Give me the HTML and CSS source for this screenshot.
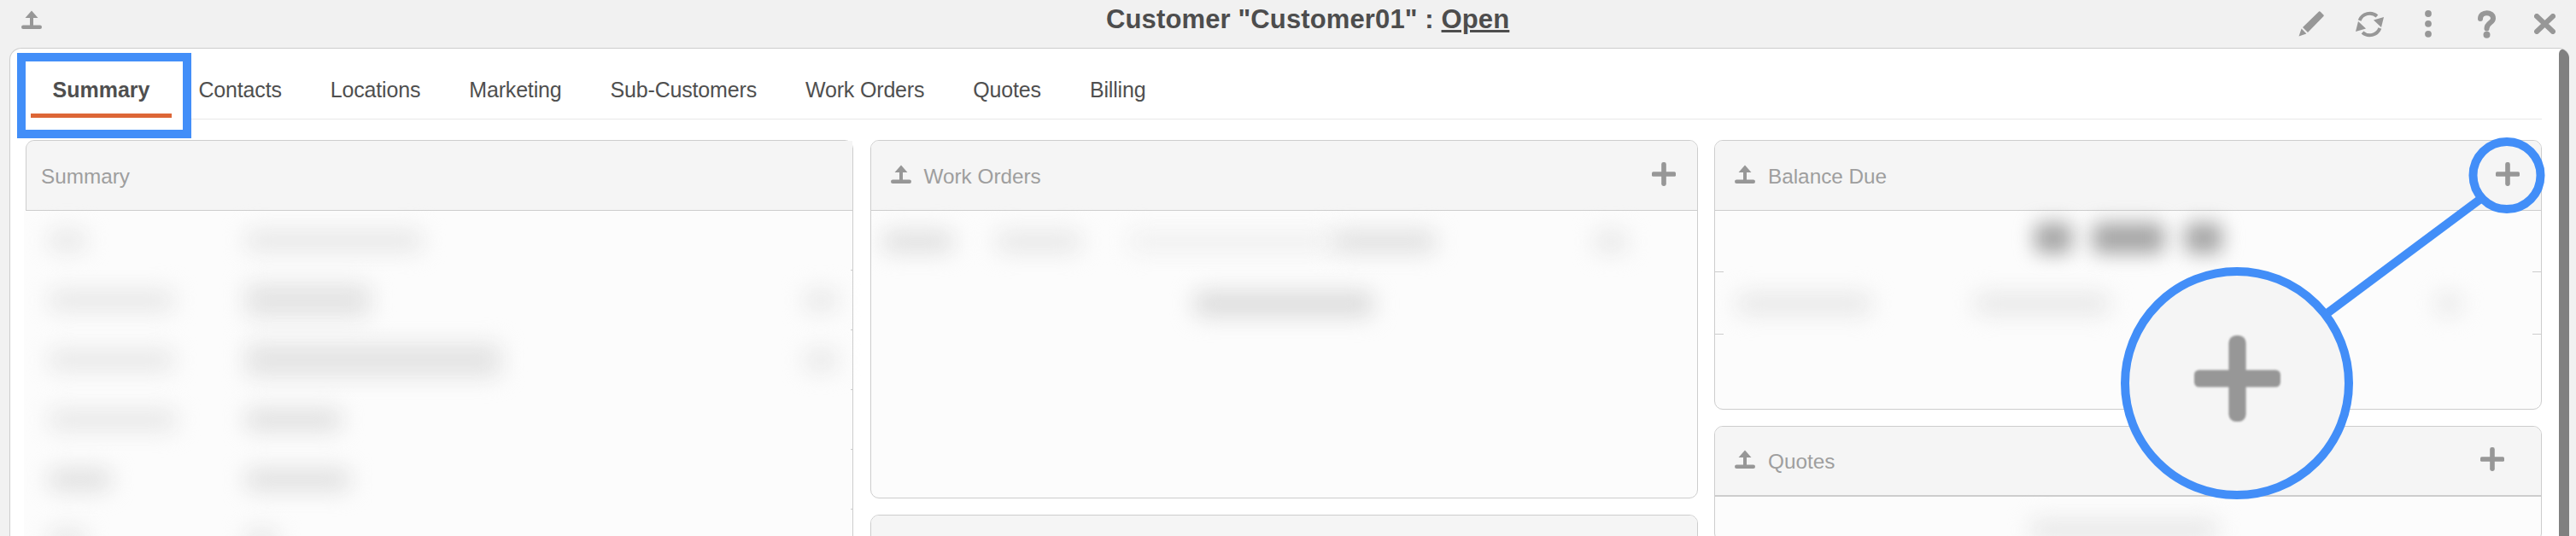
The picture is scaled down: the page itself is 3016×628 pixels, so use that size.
FILE: index.html
```html
<!DOCTYPE html>
<html lang="en">
  <head>
    <meta charset="UTF-8" />
    <title>Customer01</title>
    <link rel="stylesheet" href="styles.css">
  </head>
  <body>
    <svg class="icon-defs" width="0" height="0">
      <symbol id="i-upload" viewBox="0 0 24 22">
        <path d="M12 0.5 L19.5 9 H14 V18 H10 V9 H4.5 Z" />
        <rect x="0" y="17.5" width="24" height="4.5" rx="2.2" />
      </symbol>
      <symbol id="i-plus" viewBox="0 0 28 28">
        <rect x="0" y="11.2" width="28" height="5.6" rx="1.6" />
        <rect x="11.2" y="0" width="5.6" height="28" rx="2.4" />
      </symbol>
    </svg>

    <div class="titlebar">
      <svg class="ico-upload"><use href="#i-upload" /></svg>
      <div class="title">Customer "Customer01" : <u>Open</u></div>
      <div class="actions">
        <span class="action">
          <svg width="30" height="30" viewBox="0 0 30 30"><path d="M24 0.5 Q25 0 26 1 L29.5 4.5 Q30 5.5 29.5 6 L11 25 L5 19 Z" /><path d="M3.6 20.6 L9.4 26.4 L0.5 29.5 Z" /></svg>
        </span>
        <span class="action">
          <svg width="33" height="33" viewBox="0 0 33 33"><path class="line" d="M4.6 12 A12.8 12.8 0 0 1 25 7" /><path class="line" d="M28.4 21 A12.8 12.8 0 0 1 8 26" /><path d="M21 11.5 L33 8 L30 20 Z" /><path d="M12 21.5 L0 25 L3 13 Z" /></svg>
        </span>
        <span class="action">
          <svg width="8" height="32" viewBox="0 0 8 32"><circle cx="4" cy="4" r="3.9" /><circle cx="4" cy="15.8" r="3.9" /><circle cx="4" cy="27.8" r="3.9" /></svg>
        </span>
        <span class="action">
          <svg width="21" height="33" viewBox="0 0 21 33"><path class="line fat" d="M3 10 C3 1 18 1 18 9.5 C18 15 10.5 14.5 10.5 21.5" /><circle cx="10.5" cy="28.8" r="4" /></svg>
        </span>
        <span class="action">
          <svg width="25" height="24" viewBox="0 0 25 24"><path class="line fat" d="M3 3 L22 21 M22 3 L3 21" /></svg>
        </span>
      </div>
    </div>

    <div class="window">
      <div class="pane">
        <div class="tabs">
          <div class="tab active">Summary</div>
          <div class="tab">Contacts</div>
          <div class="tab">Locations</div>
          <div class="tab">Marketing</div>
          <div class="tab">Sub-Customers</div>
          <div class="tab">Work Orders</div>
          <div class="tab">Quotes</div>
          <div class="tab">Billing</div>
        </div>

        <div class="columns">
          <div class="column">
            <div class="card">
              <div class="card-head"><span class="card-title">Summary</span></div>
              <div class="card-body veil-right">
                <div class="row info"><div class="row-in"><i class="blob w44 soft"></i><i class="blob w208 soft"></i></div></div>
                <div class="row info"><div class="row-in"><i class="blob w147 soft"></i><i class="blob w147 tall"></i><i class="blob w38 end soft"></i></div></div>
                <div class="row info"><div class="row-in"><i class="blob w147 soft"></i><i class="blob w300 tall"></i><i class="blob w38 end soft"></i></div></div>
                <div class="row info"><div class="row-in"><i class="blob w150 soft"></i><i class="blob w113"></i></div></div>
                <div class="row info"><div class="row-in"><i class="blob w73"></i><i class="blob w123"></i></div></div>
                <div class="row info"><div class="row-in"><i class="blob w44 soft"></i><i class="blob w38 soft"></i></div></div>
              </div>
            </div>
          </div>

          <div class="column">
            <div class="card card-orders">
              <div class="card-head">
                <svg class="ico-upload"><use href="#i-upload" /></svg>
                <span class="card-title">Work Orders</span>
                <svg class="ico-plus"><use href="#i-plus" /></svg>
              </div>
              <div class="card-body">
                <div class="orders-row">
                  <i class="blob w83"></i><i class="blob w100 soft"></i><i class="blob w240 faint"></i><i class="blob w120"></i><i class="blob w38 end soft"></i>
                </div>
                <div class="orders-more"><i class="blob w210 dark"></i></div>
              </div>
            </div>
            <div class="card">
              <div class="card-head"></div>
            </div>
          </div>

          <div class="column">
            <div class="card card-balance">
              <div class="card-head">
                <svg class="ico-upload"><use href="#i-upload" /></svg>
                <span class="card-title">Balance Due</span>
                <svg class="ico-plus"><use href="#i-plus" /></svg>
              </div>
              <div class="card-body veil-both">
                <div class="row balance-top"><div class="row-in"><i class="blob total w44"></i><i class="blob total w73"></i><i class="blob total w44"></i></div></div>
                <div class="row balance-line"><div class="row-in"><i class="blob w158 soft"></i><i class="blob w158 soft"></i><i class="blob w28 end soft"></i></div></div>
                <div class="row balance-end"><div class="row-in"></div></div>
              </div>
            </div>
            <div class="card card-quotes">
              <div class="card-head">
                <svg class="ico-upload"><use href="#i-upload" /></svg>
                <span class="card-title">Quotes</span>
                <svg class="ico-plus"><use href="#i-plus" /></svg>
              </div>
              <div class="card-body">
                <div class="quotes-more"><i class="blob w220 soft"></i></div>
              </div>
            </div>
          </div>
        </div>
      </div>
      <div class="scrollbar"></div>
    </div>

    <svg class="callouts" width="3016" height="628" viewBox="0 0 3016 628">
      <rect x="25" y="67" width="194" height="90" />
      <line x1="2905" y1="232.5" x2="2722" y2="369" />
      <circle cx="2935" cy="205.5" r="39.5" />
      <circle class="lens" cx="2619" cy="449" r="131" />
      <use class="lens-plus" href="#i-plus" x="2569" y="393" width="101" height="101" />
    </svg>
  </body>
</html>
```

FILE: styles.css
```css
* {
  margin: 0;
  padding: 0;
  box-sizing: border-box;
}

:root {
  --chrome: #f1f1f1;
  --icon: #979797;
  --line: #cdcdcd;
  --head: #f5f5f5;
  --veil: #fcfcfc;
  --blue: #428ef8;
}

html,
body {
  height: 628px;
  overflow: hidden;
}

body {
  position: relative;
  font-family: "Liberation Sans", Arial, sans-serif;
  background-color: var(--chrome);
}

.icon-defs {
  position: absolute;
}

svg {
  display: block;
  fill: var(--icon);
}

.line {
  fill: none;
  stroke: var(--icon);
  stroke-width: 4;
}

.line.fat {
  stroke-width: 6;
  stroke-linecap: round;
}

.ico-upload {
  width: 24px;
  height: 22px;
  flex: none;
}

.ico-plus {
  width: 28px;
  height: 28px;
  flex: none;
  margin-left: auto;
}

/* title bar */
.titlebar {
  display: flex;
  align-items: center;
  height: 56px;
  padding-left: 25px;
}

.titlebar > .ico-upload {
  margin-bottom: 10px;
}

.title {
  margin-left: 1246px;
  margin-bottom: 10px;
  font-size: 31px;
  line-height: 36px;
  letter-spacing: 0.13px;
  font-weight: bold;
  color: #4d4d4d;
  white-space: nowrap;
}

.actions {
  display: flex;
  margin-left: auto;
  margin-right: 2px;
}

.action {
  display: flex;
  justify-content: center;
  align-items: center;
  width: 68.5px;
  height: 56px;
}

/* window */
.window {
  display: flex;
  width: 2997px;
  height: 572px;
  margin-left: 11px;
  background-color: #fff;
  border-top: 1px solid var(--line);
  border-left: 1px solid var(--line);
  border-top-left-radius: 14px;
  border-top-right-radius: 12px;
  overflow: hidden;
}

.pane {
  flex: 1;
  min-width: 0;
}

.scrollbar {
  width: 12px;
  flex: none;
  background-color: #808080;
  border-top-left-radius: 6px;
  border-top-right-radius: 6px;
}

.tabs {
  display: flex;
  gap: 6px;
  height: 83px;
  margin: 0 20px 0 18px;
  padding-left: 6px;
  border-bottom: 1px solid #e8e8e8;
}

.tab {
  height: 81px;
  padding: 34px 25.5px 13px;
  font-size: 25px;
  line-height: 29px;
  letter-spacing: -0.17px;
  color: #4f4f4f;
  border-bottom: 5px solid transparent;
  white-space: nowrap;
}

.tab.active {
  font-weight: bold;
  letter-spacing: 0;
  background-color: #fff;
  border-bottom-color: #dd6636;
  box-shadow: 0 0 0 13px #fff;
}

/* cards */
.columns {
  display: grid;
  grid-template-columns: repeat(3, 1fr);
  gap: 19.5px;
  margin: 24px 20px 0 18px;
}

.column {
  display: flex;
  flex-direction: column;
  gap: 19px;
  min-width: 0;
}

.card {
  border: 1px solid var(--line);
  border-radius: 10px;
  background-color: var(--veil);
  overflow: hidden;
}

.card-head {
  display: flex;
  align-items: center;
  gap: 15px;
  height: 82px;
  padding: 0 25px 0 23px;
  background-color: var(--head);
  border-bottom: 1px solid var(--line);
}

.card-head .ico-upload {
  margin-bottom: 4px;
}

.card-head .ico-plus {
  margin-bottom: 4px;
}

.card-title {
  font-size: 24.3px;
  line-height: 28px;
  margin-top: 2px;
  color: #9e9e9e;
}

.column:first-child .card {
  border-left-color: transparent;
  border-bottom-left-radius: 0;
  overflow: visible;
}

.column:first-child .card-head {
  padding-left: 17px;
  border-left: 1px solid var(--line);
  margin-left: -1px;
  border-top-left-radius: 9px;
}

.column:first-child .card-body {
  margin-left: -3px;
}

.card-orders {
  height: 420px;
}

.card-balance {
  height: 316px;
}

.card-quotes .card-head {
  padding-right: 43px;
  border-bottom-width: 2px;
}

/* redacted rows: the veil hides the divider except at the card edges */
.row {
  border-bottom: 1px solid var(--line);
}

.row-in {
  display: flex;
  align-items: center;
  height: calc(100% + 1px);
  background-color: var(--veil);
}

.info {
  height: 70px;
}

.veil-right .row-in {
  margin-right: 2px;
  padding-left: 29px;
}

.veil-both .row-in {
  margin: 0 10px;
}

.blob {
  display: block;
  flex: none;
  height: 26px;
  background-color: #e0e0e0;
  border-radius: 8px;
  filter: blur(13px);
}

.blob.soft {
  background-color: #e8e8e8;
}

.blob.tall {
  height: 40px;
  background-color: #e4e4e4;
}

.blob.faint {
  background-color: #f1f1f1;
}

.blob.dark {
  height: 30px;
  background-color: #dcdcdc;
}

.blob.end {
  margin-left: auto;
  margin-right: 16px;
}

.w28 { width: 28px; }
.w38 { width: 38px; }
.w44 { width: 44px; }
.w73 { width: 73px; }
.w83 { width: 83px; }
.w100 { width: 100px; }
.w113 { width: 113px; }
.w120 { width: 120px; }
.w123 { width: 123px; }
.w147 { width: 147px; }
.w150 { width: 150px; }
.w158 { width: 158px; }
.w208 { width: 208px; }
.w210 { width: 210px; }
.w220 { width: 220px; }
.w240 { width: 240px; }
.w300 { width: 300px; }

.info .row-in > .w44:first-child { margin-right: 186px; }
.info .row-in > .w147:first-child { margin-right: 83px; }
.info .row-in > .w150:first-child { margin-right: 80px; }
.info .row-in > .w73:first-child { margin-right: 157px; }

.orders-row {
  display: flex;
  align-items: center;
  gap: 50px;
  height: 72px;
  padding-left: 13px;
}

.orders-row .faint {
  margin-left: 5px;
  margin-right: -50px;
}

.orders-row .end {
  margin-right: 82px;
}

.orders-more {
  display: flex;
  justify-content: center;
  align-items: center;
  height: 74px;
}

.balance-top {
  height: 72px;
}

.balance-top .row-in {
  justify-content: center;
  gap: 24px;
}

.blob.total {
  height: 36px;
  margin-bottom: 8px;
  background-color: #a6a6a6;
  filter: blur(11px);
}

.balance-top .total:nth-child(2) {
  width: 84px;
}

.balance-line {
  height: 73px;
}

.balance-line .row-in {
  padding-left: 15px;
}

.balance-line .w158:first-child {
  margin-right: 121px;
}

.balance-line .end {
  margin-right: 84px;
}

.balance-end {
  height: 72px;
  border-bottom: 0;
}

.quotes-more {
  display: flex;
  justify-content: center;
  padding: 26px 10px 0 0;
}

/* callouts sit on top of the page */
.callouts {
  position: absolute;
  top: 0;
  left: 0;
  pointer-events: none;
}

.callouts rect,
.callouts circle,
.callouts line {
  fill: none;
  stroke: var(--blue);
  stroke-width: 10;
}

.callouts .lens {
  fill: var(--head);
}

.lens-plus {
  filter: blur(0.8px);
}
```
